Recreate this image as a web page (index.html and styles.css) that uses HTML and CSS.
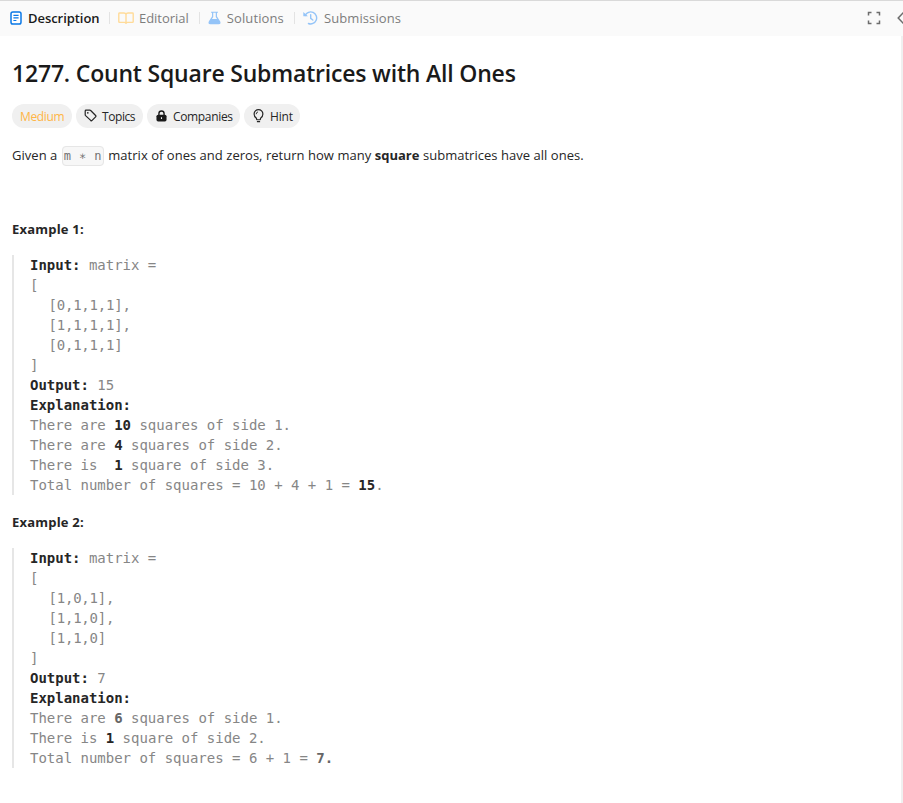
FILE: index.html
```html
<!DOCTYPE html>
<html lang="en">
<head>
<meta charset="utf-8">
<title>Count Square Submatrices with All Ones</title>
<link rel="stylesheet" href="styles.css">
</head>
<body>
<header class="tabs">
  <nav class="tab-list">
    <a class="tab active"><svg width="12" height="14" viewBox="0 0 12 14"><rect x="1" y="1" width="10" height="12" rx="1.8" fill="#fff" stroke="#0a78e6" stroke-width="1.5"/><path d="M3.400 4.300h5.200M3.400 6.900h5.200M3.400 9.500h3" stroke="#0a78e6" stroke-width="1.200"/></svg><span>Description</span></a>
    <i class="sep"></i>
    <a class="tab editorial"><svg width="16" height="12" viewBox="0 0 16 12"><path d="M8 10.600V2.200Q7.600 1 6 1H1.500q-.7 0-.7.700v8q0 .7.700.700H6.600q1 0 1.400.9.400-.9 1.400-.9h5.100q.7 0 .7-.7v-8q0-.7-.7-.7H10Q8.400 1 8 2.200" fill="none" stroke="#ffdb99" stroke-width="1.400"/></svg><span>Editorial</span></a>
    <i class="sep"></i>
    <a class="tab solutions"><svg width="13" height="14" viewBox="0 0 14 14"><path d="M3.300.8h7.400M5 1v4.600L1.400 11.200q-.8 1.900 1 1.900h9.200q1.800 0 1-1.900L9 5.600V1" fill="none" stroke="#94c4f8" stroke-width="1.300"/><path d="M3.300 8h7.400l2.300 4-.8 1H1.800l-.8-1z" fill="#94c4f8"/></svg><span>Solutions</span></a>
    <i class="sep"></i>
    <a class="tab submissions"><svg width="15" height="14" viewBox="0 0 15 14"><path d="M2.200 4.400a6 6 0 1 1 3.200 8.100M7.700 3.700v3.600l2.100 1.700" fill="none" stroke="#94c4f8" stroke-width="1.400" stroke-linecap="round"/><path d="M.3.900v4.300h4.600z" fill="#94c4f8"/></svg><span>Submissions</span></a>
  </nav>
  <div class="tools">
    <svg width="14" height="14" viewBox="0 0 14 14"><path d="M1.500 4.500v-3h3M9.500 1.500h3v3M12.500 9.500v3h-3M4.500 12.500h-3v-3" fill="none" stroke="#6c6c6c" stroke-width="1.500"/></svg>
    <svg width="6" height="12" viewBox="0 0 6 12"><path d="M6.500.5L1.200 6l5.300 5.500" fill="none" stroke="#6c6c6c" stroke-width="1.500"/></svg>
  </div>
</header>
<main class="content">
  <h1>1277. Count Square Submatrices with All Ones</h1>
  <div class="tags">
    <span class="tag medium"><span>Medium</span></span>
    <span class="tag topics"><svg width="13" height="13" viewBox="0 0 14 14"><path d="M1.300 2.100v4.100q0 .5.400.9l5.500 5.200q.8.700 1.500 0l3.800-3.800q.7-.7 0-1.500L7.200 1.600q-.4-.4-.9-.4H2.200q-.9 0-.9.900z" fill="none" stroke="#262626" stroke-width="1.300"/><circle cx="4.100" cy="4.100" r=".9" fill="#262626"/></svg><span>Topics</span></span>
    <span class="tag companies"><svg width="11" height="12" viewBox="0 0 12 13"><rect x=".5" y="5" width="11" height="7.500" rx="1.800" fill="#1a1a1a"/><path d="M3.200 5.500V3.800a2.800 2.800 0 0 1 5.600 0v1.700" fill="none" stroke="#1a1a1a" stroke-width="1.500"/><path d="M6 7.800v2" stroke="#eee" stroke-width="1.200"/></svg><span>Companies</span></span>
    <span class="tag hint"><svg width="11" height="14" viewBox="0 0 11 15"><path d="M3.600 11.500L3.300 10Q.8 8.200.8 5.400A4.600 4.600 0 0 1 10.200 5.400Q10.200 8.200 7.700 10l-.3 1.500zM3.800 13.600h3.400" fill="none" stroke="#262626" stroke-width="1.300" stroke-linejoin="round"/><path d="M3 5.600Q3 3.500 5 3.100" fill="none" stroke="#262626"/></svg><span>Hint</span></span>
  </div>
  <p class="intro">Given a <code>m ∗ n</code> matrix of ones and zeros, return how many <b>square</b> submatrices have all ones.</p>
  <p class="example"><b>Example 1:</b></p>
  <pre><b>Input:</b> matrix =
[
<span class="row">  [0,1,1,1],
</span><span class="row">  [1,1,1,1],
</span><span class="row">  [0,1,1,1]
</span>]
<b>Output:</b> 15
<b>Explanation:</b>
There are <b>10</b> squares of side 1.
There are <b>4</b> squares of side 2.
There is  <b>1</b> square of side 3.
Total number of squares = 10 + 4 + 1 = <b>15</b>.
</pre>
  <p class="example second"><b>Example 2:</b></p>
  <pre><b>Input:</b> matrix =
[
<span class="row">  [1,0,1],
</span><span class="row">  [1,1,0],
</span><span class="row">  [1,1,0]
</span>]
<b>Output:</b> 7
<b>Explanation:</b>
There are <b class="soft">6</b> squares of side 1.
There is <b>1</b> square of side 2.
Total number of squares = 6 + 1 = <b class="soft">7.</b>
</pre>
</main>
</body>
</html>
```

FILE: styles.css
```css
* { box-sizing: border-box; }
body {
  margin: 0;
  height: 803px;
  overflow: hidden;
  display: flex;
  flex-direction: column;
  background: #fff;
  color: #262626;
  font: 13px/20px "Open Sans", "Noto Sans", sans-serif;
}
.tabs {
  height: 36px;
  flex: none;
  display: flex;
  justify-content: space-between;
  align-items: center;
  background: #fafafa;
  border-top: 1px solid #d9d9d9;
  padding: 0 0 2px 10px;
}
.tab-list, .tab, .tools, .tag { display: flex; align-items: center; }
.tab { gap: 5px; color: #7d7d7d; }
.active { gap: 6px; width: 91px; color: #1a1a1a; font-weight: 600; letter-spacing: -.05px; }
.editorial { letter-spacing: -.03px; }
.submissions { gap: 6px; letter-spacing: .1px; }
.solutions { gap: 6px; letter-spacing: .12px; }
.sep { width: 1px; height: 12px; margin: 0 8px; background: #e3e3e3; }
.editorial + .sep { margin-left: 10px; }
.solutions + .sep { margin-left: 10px; }
.tools { gap: 16px; }
.content {
  flex: 1;
  padding: 23px 12px 0;
  border-right: 2px solid #f0f0f0;
}
h1 {
  margin: 0;
  font-size: 23px;
  line-height: 28px;
  font-weight: 600;
  letter-spacing: -.19px;
  color: #1a1a1a;
  white-space: nowrap;
}
.tags { display: flex; gap: 4px; margin-top: 17px; }
.tag {
  height: 24px;
  padding: 1px 0 0 8px;
  gap: 5px;
  border-radius: 12px;
  background: #f0f0f0;
  font-size: 12px;
}
.medium { width: 60px; color: #ffb545; letter-spacing: -.35px; }
.topics { width: 67px; letter-spacing: -.42px; }
.companies { width: 93px; padding-left: 9px; letter-spacing: -.34px; }
.hint { width: 56px; padding-left: 9px; letter-spacing: -.2px; }
.companies svg, .hint svg { margin-right: 1px; }
.tag svg { margin-top: -2px; }
.intro { margin: 17px 0 0; height: 20px; white-space: nowrap; letter-spacing: .03px; }
code {
  margin: 0 1px;
  padding: 2px 1px;
  border: 1px solid #e6e6e6;
  border-radius: 4px;
  background: #f7f7f7;
  color: #737373;
  font: 12px/16px "DejaVu Sans Mono", monospace;
  letter-spacing: .4px;
}
.example { margin: 54px 0 0; letter-spacing: .2px; }
.second { margin-top: 17px; }
pre {
  margin: 16px 0 0;
  padding-left: 16px;
  border-left: 2px solid #e6e6e6;
  font: 14px/20px "DejaVu Sans Mono", monospace;
  letter-spacing: -.01px;
  color: #868686;
}
pre b { color: #262626; }
pre .soft { color: #666; }
.row { margin-left: 2px; letter-spacing: -.2px; }
```
